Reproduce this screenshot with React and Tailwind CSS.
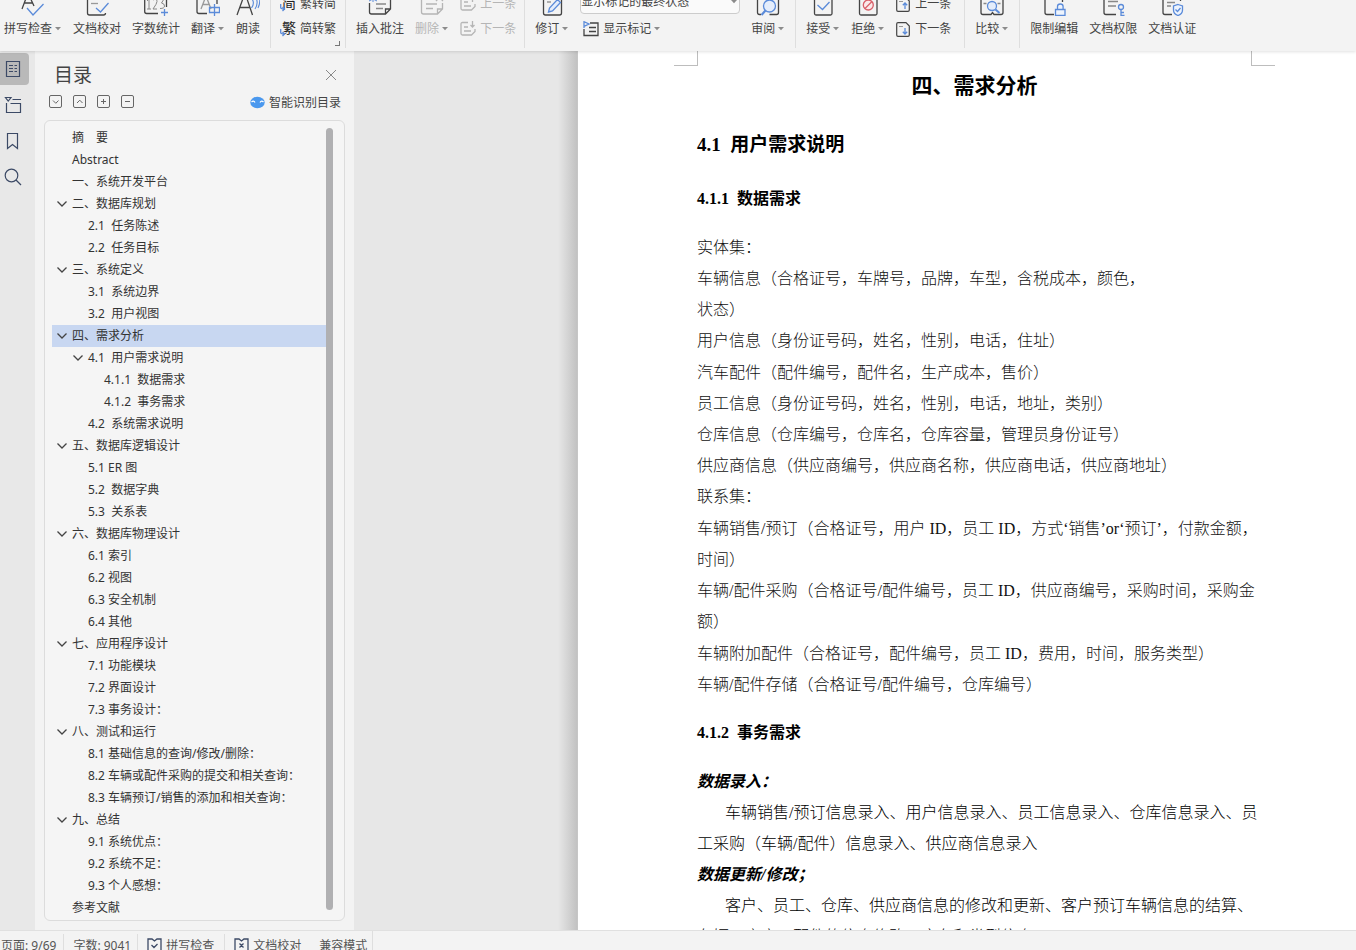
import { useState } from 'react';
import clsx from 'clsx';

// [level, label, has children]
const OUTLINE = [
  [0, '摘　要'],
  [0, 'Abstract'],
  [0, '一、系统开发平台'],
  [0, '二、数据库规划', true],
  [1, '2.1  任务陈述'],
  [1, '2.2  任务目标'],
  [0, '三、系统定义', true],
  [1, '3.1  系统边界'],
  [1, '3.2  用户视图'],
  [0, '四、需求分析', true],
  [1, '4.1  用户需求说明', true],
  [2, '4.1.1  数据需求'],
  [2, '4.1.2  事务需求'],
  [1, '4.2  系统需求说明'],
  [0, '五、数据库逻辑设计', true],
  [1, '5.1 ER 图'],
  [1, '5.2  数据字典'],
  [1, '5.3  关系表'],
  [0, '六、数据库物理设计', true],
  [1, '6.1 索引'],
  [1, '6.2 视图'],
  [1, '6.3 安全机制'],
  [1, '6.4 其他'],
  [0, '七、应用程序设计', true],
  [1, '7.1 功能模块'],
  [1, '7.2 界面设计'],
  [1, '7.3 事务设计：'],
  [0, '八、测试和运行', true],
  [1, '8.1 基础信息的查询/修改/删除：'],
  [1, '8.2 车辆或配件采购的提交和相关查询：'],
  [1, '8.3 车辆预订/销售的添加和相关查询：'],
  [0, '九、总结', true],
  [1, '9.1 系统优点：'],
  [1, '9.2 系统不足：'],
  [1, '9.3 个人感想：'],
  [0, '参考文献'],
];

const INDENT = ['pl-0', 'pl-4', 'pl-8'];

// Blocks of paragraphs; a paragraph is a list of its lines.
const DATA_BLOCKS = [
  [
    ['实体集：'],
    ['车辆信息（合格证号，车牌号，品牌，车型，含税成本，颜色，', '状态）'],
    ['用户信息（身份证号码，姓名，性别，电话，住址）'],
  ],
  [
    ['汽车配件（配件编号，配件名，生产成本，售价）'],
    ['员工信息（身份证号码，姓名，性别，电话，地址，类别）'],
    ['仓库信息（仓库编号，仓库名，仓库容量，管理员身份证号）'],
    ['供应商信息（供应商编号，供应商名称，供应商电话，供应商地址）'],
    ['联系集：'],
  ],
  [
    ['车辆销售/预订（合格证号，用户 ID，员工 ID，方式‘销售’or‘预订’，付款金额，', '时间）'],
    ['车辆/配件采购（合格证号/配件编号，员工 ID，供应商编号，采购时间，采购金', '额）'],
  ],
  [
    ['车辆附加配件（合格证号，配件编号，员工 ID，费用，时间，服务类型）'],
    ['车辆/配件存储（合格证号/配件编号，仓库编号）'],
  ],
];

const BLUE = '#5b8bd9';

function Svg({ size = 24, className, children, ...rest }) {
  return (
    <svg
      width={size}
      height={size}
      viewBox={`0 0 ${size} ${size}`}
      fill="none"
      stroke="currentColor"
      strokeWidth="1.3"
      className={clsx('shrink-0', className)}
      aria-hidden="true"
      {...rest}
    >
      {children}
    </svg>
  );
}

function Caret() {
  return (
    <svg width="7" height="4" viewBox="0 0 7 4" className="ml-[3px] shrink-0 text-[#8b8b8b]" aria-hidden="true">
      <path d="M0 0h6L3 3.300z" fill="currentColor" />
    </svg>
  );
}

const ICONS = {
  spell: (
    <Svg>
      <path d="M1 17 7 1l6 13M3 11h9" />
      <path d="m6 16 6 7L22.500 12" stroke={BLUE} />
    </Svg>
  ),
  proof: (
    <Svg>
      <path d="M20.500 3v-2M2.500 1v20q0 2 2 2h14q2 0 2-2" />
      <path d="M6 11.500h7" stroke="#999" />
      <path d="m11 16 4.500 4 8-9" stroke={BLUE} />
    </Svg>
  ),
  count: (
    <Svg>
      <path d="M.7 1v18.500q0 2 2 2H14M22.500 1v14" />
      <path d="m3 9 2-2v10M3 17h4M9 8q4-2.500 4 1.500 0 2-4 7.500h4M16 7h4l-2.500 4q3 .500 3 3t-4.500 2.500" stroke="#888" strokeWidth="1" />
      <path d="M20.500 17v7M17 20.500h7" stroke={BLUE} />
    </Svg>
  ),
  translate: (
    <Svg>
      <path d="M1 1v18.500q0 2 2 2h8M21 1v11" />
      <path d="m5 17 5-13 5 13M6.500 12.500h7" stroke="#999" />
      <path d="M13.500 15.500h10v5h-10zM18.500 12v12" stroke={BLUE} />
    </Svg>
  ),
  read: (
    <Svg>
      <path d="m1 23 8-22 7.500 22M4 15.500h9.500" />
      <path d="M16 7q3 4-.500 9M19.500 5q3.500 6-.500 12M23 3q2 7-1 13" stroke={BLUE} strokeWidth="1.100" />
    </Svg>
  ),
  comment: (
    <Svg>
      <path d="M1.500 11v9q0 2 2 2h14l5-5V1M17.500 22v-5h5" />
      <path d="M8 12h10M8 16.500h7" stroke="#888" />
      <path d="M5 3v7M1 9l8-4M1 5l8 4" stroke={BLUE} strokeWidth="1" />
    </Svg>
  ),
  remove: (
    <Svg>
      <path d="M1.500 8v12q0 2 2 2h14l5-5v-6M17.500 22v-5h5M6 12h11M6 16.500h7M16 2l7 7M23 2l-7 7" />
    </Svg>
  ),
  revise: (
    <Svg>
      <path d="M3.500 1v20q0 2 2 2h14q2 0 2-2V1" />
      <path d="M7 10h4" stroke="#888" />
      <path d="m8.500 20 1-4 8-8.500 3 3-8 8.500z" stroke={BLUE} fill="#e4edfb" />
    </Svg>
  ),
  review: (
    <Svg>
      <path d="M5 22.500H3.500q-2 0-2-2V1M22.500 1v19.500q0 2-2 2h-7" />
      <circle cx="13.500" cy="14" r="6" stroke={BLUE} fill="#e4edfb" />
      <path d="m9.500 18.500-4 4.500" stroke={BLUE} strokeWidth="2.200" />
    </Svg>
  ),
  accept: (
    <Svg>
      <path d="M3.500 1v20.500q0 1.500 1.500 1.500h14.500q1.500 0 1.500-1.500V1" />
      <path d="m6.500 13 5 4.500L18.500 10" stroke={BLUE} />
    </Svg>
  ),
  reject: (
    <Svg>
      <path d="M3.500 1v20.500q0 1.500 1.500 1.500h14.500q1.500 0 1.500-1.500V1" />
      <circle cx="12.300" cy="13" r="5" stroke="#d9606a" fill="#fbe9ea" />
      <path d="m9 16.500 7-7" stroke="#d9606a" />
    </Svg>
  ),
  compare: (
    <Svg>
      <path d="M1 1v19.500q0 2 2 2h8l1.500-2 1.500 2h7q2 0 2-2V1" />
      <path d="M3.500 11.500h3M17.500 11.500h3" stroke="#888" />
      <circle cx="12" cy="14" r="4.500" stroke={BLUE} fill="#e4edfb" />
      <path d="m15.500 17.500 4 3.500" stroke={BLUE} strokeWidth="2" />
    </Svg>
  ),
  restrict: (
    <Svg>
      <path d="M12 22.500H5q-2 0-2-2V1M20.500 1v9" />
      <path d="M13.500 17.500h9.500v6h-9.500zM15.500 17.500v-3q0-2.500 2.800-2.500t2.800 2.500v3" stroke={BLUE} fill="#eef4fd" />
    </Svg>
  ),
  rights: (
    <Svg>
      <path d="M15 22.500H5q-2 0-2-2V1M20.500 1v7" />
      <path d="M7 9.500h10M7 14h8" stroke="#888" />
      <circle cx="20" cy="15" r="2.500" stroke={BLUE} />
      <path d="M20 17.500v6h3.500M20 20.500h3" stroke={BLUE} />
    </Svg>
  ),
  certify: (
    <Svg>
      <path d="M12 22.500H5q-2 0-2-2V1M20.500 1v8" />
      <path d="M7 10.500h8M7 14h4" stroke="#888" />
      <path d="m18 12.500 4.500 1.500v4q0 4-4.500 5.500-4.500-1.500-4.500-5.500v-4z" stroke={BLUE} fill="#eef4fd" />
      <path d="m15.500 17.500 2 2 3-3.500" stroke={BLUE} />
    </Svg>
  ),
};

function RibbonButton({ icon, caret, disabled, children }) {
  return (
    <button
      type="button"
      disabled={disabled}
      className={clsx('flex shrink-0 flex-col items-center gap-[5px]', disabled && 'text-[#b5b5b5]')}
    >
      {ICONS[icon]}
      <span className="flex items-center leading-4">
        {children}
        {caret && <Caret />}
      </span>
    </button>
  );
}

function RowButton({ icon, caret, disabled, children }) {
  return (
    <button
      type="button"
      disabled={disabled}
      className={clsx('flex items-center gap-1 leading-4', disabled && 'text-[#b5b5b5]')}
    >
      {icon}
      <span className="flex items-center">
        {children}
        {caret && <Caret />}
      </span>
    </button>
  );
}

function ConvertIcon({ glyph }) {
  return (
    <Svg size={16}>
      <text x="2" y="12" fontSize="14" fill="#222" stroke="none">{glyph}</text>
      <path d="M.7 8v3.500q0 1.500 3.500 1.500M2.500 11l2 2-2 2" stroke={BLUE} />
    </Svg>
  );
}

function NoteIcon({ down }) {
  return (
    <Svg size={16}>
      <path d="M8 1.500H2.500q-1.500 0-1.500 1.500v9.500q0 1.500 1.500 1.500h9l3.500-3.500V8M4 6h4M4 10h7" />
      <path d={down ? 'M12.500 0v6M10.500 4l2 2 2-2' : 'M12.500 6V0M10.500 2l2-2 2 2'} />
    </Svg>
  );
}

function PageArrowIcon({ down }) {
  return (
    <Svg size={15}>
      <path d="M10 .7H2Q.7.700.7 2v11q0 1.300 1.300 1.300h10q1.300 0 1.300-1.300V4z" strokeWidth="1.200" />
      <path d="M3 4.500h4" stroke="#999" strokeWidth="1" />
      <path d={down ? 'M9 6v6M6.800 9.800 9 12l2.200-2.200' : 'M9 12V6M6.800 8.200 9 6l2.200 2.200'} stroke={BLUE} />
    </Svg>
  );
}

function MarkupIcon() {
  return (
    <Svg size={16}>
      <path d="M7 2h8v12.500H1V8M6 6.500h7M6 10.500h7" />
      <path d="M1 7V.7l5 2.300-5 2.300" stroke={BLUE} />
    </Svg>
  );
}

function Group({ className, last, children }) {
  return (
    <div className={clsx('flex h-12 shrink-0 items-end gap-[11px] pb-[11px]', !last && 'border-r border-[#dedede]', className)}>
      {children}
    </div>
  );
}

function Stack({ children }) {
  return <div className="flex shrink-0 flex-col items-start gap-[9px]">{children}</div>;
}

function Ribbon() {
  return (
    <header className="z-10 flex h-[51px] shrink-0 items-start overflow-hidden bg-[#f3f3f3] text-xs whitespace-nowrap text-[#444] shadow-[0_1px_3px_rgba(0,0,0,0.12)]">
      <Group className="pr-[10px] pl-1">
        <RibbonButton icon="spell" caret>拼写检查</RibbonButton>
        <RibbonButton icon="proof">文档校对</RibbonButton>
        <RibbonButton icon="count">字数统计</RibbonButton>
        <RibbonButton icon="translate" caret>翻译</RibbonButton>
        <RibbonButton icon="read">朗读</RibbonButton>
      </Group>
      <Group className="relative px-[9px]">
        <Stack>
          <RowButton icon={<ConvertIcon glyph="简" />}>繁转简</RowButton>
          <RowButton icon={<ConvertIcon glyph="繁" />}>简转繁</RowButton>
        </Stack>
        <span className="absolute right-[5px] bottom-[2px] size-[5px] border-r border-b border-[#777]" />
      </Group>
      <Group className="pr-2 pl-[10px]">
        <RibbonButton icon="comment">插入批注</RibbonButton>
        <RibbonButton icon="remove" caret disabled>删除</RibbonButton>
        <Stack>
          <RowButton icon={<NoteIcon />} disabled>上一条</RowButton>
          <RowButton icon={<NoteIcon down />} disabled>下一条</RowButton>
        </Stack>
      </Group>
      <Group className="px-[10px]">
        <RibbonButton icon="revise" caret>修订</RibbonButton>
        <div className="flex w-40 flex-col gap-[7px]">
          <div className="relative flex items-center">
            <select
              aria-label="标记显示状态"
              className="h-6 w-full appearance-none rounded-[4px] border border-[#ccc] bg-[#fafafa] text-xs leading-4"
            >
              <option>显示标记的最终状态</option>
            </select>
            <span className="pointer-events-none absolute right-[2px]"><Caret /></span>
          </div>
          <div className="pl-[3px]">
            <RowButton icon={<MarkupIcon />} caret>显示标记</RowButton>
          </div>
        </div>
        <RibbonButton icon="review" caret>审阅</RibbonButton>
      </Group>
      <Group className="pr-[13px] pl-[10px]">
        <RibbonButton icon="accept" caret>接受</RibbonButton>
        <RibbonButton icon="reject" caret>拒绝</RibbonButton>
        <Stack>
          <RowButton icon={<PageArrowIcon />}>上一条</RowButton>
          <RowButton icon={<PageArrowIcon down />}>下一条</RowButton>
        </Stack>
      </Group>
      <Group className="px-[10px]">
        <RibbonButton icon="compare" caret>比较</RibbonButton>
      </Group>
      <Group className="px-[10px]" last>
        <RibbonButton icon="restrict">限制编辑</RibbonButton>
        <RibbonButton icon="rights">文档权限</RibbonButton>
        <RibbonButton icon="certify">文档认证</RibbonButton>
      </Group>
    </header>
  );
}

function Rail() {
  const base = 'flex h-8 w-[29px] items-center rounded-r-[4px] pl-1';
  return (
    <nav className="flex w-[35px] shrink-0 flex-col gap-1 bg-[#e8e8e8] pt-[2px] text-[#3c4a66]">
      <button type="button" aria-label="目录" className={clsx(base, 'bg-[#b9b9b9]')}>
        <Svg size={18} strokeWidth="1.200">
          <path d="M2.500 1.500h13v15h-13z" />
          <path d="M5 5.500h4M5 8.500h4M5 11.500h4M10.500 5.500H13M10.500 8.500H13M10.500 11.500H13" strokeWidth="1" />
        </Svg>
      </button>
      <button type="button" aria-label="章节" className={base}>
        <Svg size={18} strokeWidth="1.200">
          <path d="M2.500 7v9.500h14v-9h-10M8.500 3.500H17M1.500 1.500h5.500L4.200 5z" />
        </Svg>
      </button>
      <button type="button" aria-label="书签" className={base}>
        <Svg size={18} strokeWidth="1.200">
          <path d="M3.500 1.500h10v15l-5-4-5 4z" />
        </Svg>
      </button>
      <button type="button" aria-label="查找" className={base}>
        <Svg size={18} strokeWidth="1.200">
          <circle cx="7.500" cy="7.500" r="6.300" />
          <path d="m12 12 5 5" />
        </Svg>
      </button>
    </nav>
  );
}

const TOOLS = [
  ['全部展开', 'm4 5.500 2.800 2.800L9.500 5.500'],
  ['全部收起', 'm4 8 2.800-2.800L9.500 8'],
  ['展开', 'M4 6.500h5M6.500 4v5'],
  ['收起', 'M4 6.500h5'],
];

function OutlinePanel() {
  const [active, setActive] = useState(9);

  return (
    <aside className="flex w-[319px] shrink-0 flex-col bg-[#f3f3f3] pr-[9px] pb-[9px] pl-[9px]">
      <div className="flex h-10 items-center justify-between pt-2 pr-2 pl-[10px]">
        <h2 className="text-[19px] leading-6 text-[#444]">目录</h2>
        <button type="button" aria-label="关闭">
          <Svg size={12} className="text-[#888]" strokeWidth="1"><path d="m1 1 10 10M11 1 1 11" /></Svg>
        </button>
      </div>
      <div className="flex h-[29px] items-center justify-between pr-1 pl-[5px]">
        <div className="flex gap-[10px] pb-2">
          {TOOLS.map(([label, d]) => (
            <button key={label} type="button" aria-label={label}>
              <Svg size={14} className="text-[#666]" strokeWidth="1">
                <rect x=".5" y=".5" width="12" height="12" rx="1.500" />
                <path d={d} />
              </Svg>
            </button>
          ))}
        </div>
        <button type="button" className="flex items-center gap-1 pb-[6px] text-xs leading-4 text-[#444]">
          <svg width="15" height="13" viewBox="0 0 15 13" aria-hidden="true">
            <ellipse cx="7.500" cy="6.500" rx="7.200" ry="5.800" fill="#4a98ee" />
            <path d="M1.500 6q2-2 3.500.500M10 6.500Q11.500 4 13.500 6" fill="none" stroke="#fff" strokeWidth="1.200" />
          </svg>
          智能识别目录
        </button>
      </div>
      <div className="flex min-h-0 flex-1 rounded-md border border-[#dcdcdc] bg-[#f5f5f5] pr-[11px] pl-[7px]">
        <ul className="min-w-0 flex-1 overflow-hidden pt-[6px] text-xs text-[#333]">
          {OUTLINE.map(([level, label, open], i) => (
            <li key={label}>
              <a
                href={`#s${i}`}
                onClick={() => setActive(i)}
                className={clsx('flex h-[22px] items-center whitespace-pre', INDENT[level], i === active && 'bg-[#c8d7f1]')}
              >
                <span className="flex w-5 shrink-0 pl-[5px]">
                  {open && (
                    <Svg size={10} className="text-[#444]"><path d="m.5 2.500 4.500 4.500 4.500-4.500" /></Svg>
                  )}
                </span>
                {label}
              </a>
            </li>
          ))}
        </ul>
        <div className="mt-[7px] mb-[10px] w-[7px] rounded-full bg-[#b0b0b2]" />
      </div>
    </aside>
  );
}

function Block({ paragraphs }) {
  return (
    <div>
      {paragraphs.map((lines) => (
        <p key={lines[0]}>
          {lines.map((line) => <span key={line} className="block whitespace-nowrap">{line}</span>)}
        </p>
      ))}
    </div>
  );
}

function Document() {
  return (
    <main className="flex min-w-0 flex-1 overflow-hidden bg-[#e7e7e7]">
      <div className="flex w-[224px] shrink-0 justify-end">
        <div className="w-5 border-r border-[#c6c6c6] bg-linear-to-r from-[#e7e7e7] to-[#c2c2c2]" />
      </div>
      <article className="min-w-0 flex-1 bg-white font-['Liberation_Serif','Noto_Sans_CJK_SC',serif] text-base leading-[31px] text-black">
        <div className="flex justify-between pr-[81px] pl-24">
          <span className="h-[15px] w-6 border-r border-b border-[#bdbdbd]" />
          <span className="h-[15px] w-6 border-b border-l border-[#bdbdbd]" />
        </div>
        <div className="pr-[104px] pl-[119px]">
          <h1 className="text-center text-[21px] leading-10 font-bold">四、需求分析</h1>
          <h2 className="mt-[23px] text-[19px] leading-8 font-bold whitespace-pre">4.1  用户需求说明</h2>
          <h3 className="mt-[26px] leading-6 font-bold whitespace-pre">4.1.1  数据需求</h3>
          <section className="mt-[21px] flex flex-col gap-px font-light text-[#111]">
            {DATA_BLOCKS.map((paragraphs) => <Block key={paragraphs[0][0]} paragraphs={paragraphs} />)}
          </section>
          <h3 className="mt-[21px] leading-6 font-bold whitespace-pre">4.1.2  事务需求</h3>
          <section className="mt-[21px] font-light">
            <h4 className="font-bold italic">数据录入：</h4>
            <p className="indent-7 whitespace-nowrap">
              车辆销售/预订信息录入、用户信息录入、员工信息录入、仓库信息录入、员
              <br />
              <span className="inline-block indent-0">工采购（车辆/配件）信息录入、供应商信息录入</span>
            </p>
            <h4 className="font-bold italic">数据更新/修改；</h4>
            <p className="indent-7 whitespace-nowrap">
              客户、员工、仓库、供应商信息的修改和更新、客户预订车辆信息的结算、
              <br />
              <span className="inline-block indent-0">车辆、客户、配件的信息修改、库存和类型信息</span>
            </p>
          </section>
        </div>
      </article>
    </main>
  );
}

function StatusBar() {
  return (
    <footer className="z-10 flex h-5 shrink-0 items-start overflow-hidden border-t border-[#e0e0e0] bg-[#f3f3f3] text-xs whitespace-nowrap text-[#555]">
      <div className="flex h-8 divide-x divide-[#dedede] border-r border-[#dedede] pt-[3px] leading-6">
        <span className="pr-[7px] pl-px">页面: 9/69</span>
        <span className="pr-[6px] pl-[9px]">字数: 9041</span>
        <button type="button" className="flex items-start gap-1 pr-[10px] pl-[9px]">
          <Svg size={15} className="mt-[4px] text-[#3c4a66]"><path d="M5 1H1v13h13V1h-4L7.500 3zM4.500 7l2.500 2.500L10.500 6" /></Svg>
          拼写检查
        </button>
        <span className="flex gap-[18px] pr-[5px] pl-[9px]">
          <button type="button" className="flex items-start gap-1">
            <Svg size={15} className="mt-[4px] text-[#3c4a66]"><path d="M5 1H1v13h13V1h-4L7.500 3zM5.500 5.500l4 4M9.500 5.500l-4 4" /></Svg>
            文档校对
          </button>
          <span>兼容模式</span>
        </span>
      </div>
    </footer>
  );
}

export default function App() {
  return (
    <div className="flex h-screen flex-col overflow-hidden bg-[#e7e7e7] font-['Noto_Sans','Noto_Sans_CJK_SC',sans-serif]">
      <Ribbon />
      <div className="flex min-h-0 flex-1">
        <Rail />
        <OutlinePanel />
        <Document />
      </div>
      <StatusBar />
    </div>
  );
}
